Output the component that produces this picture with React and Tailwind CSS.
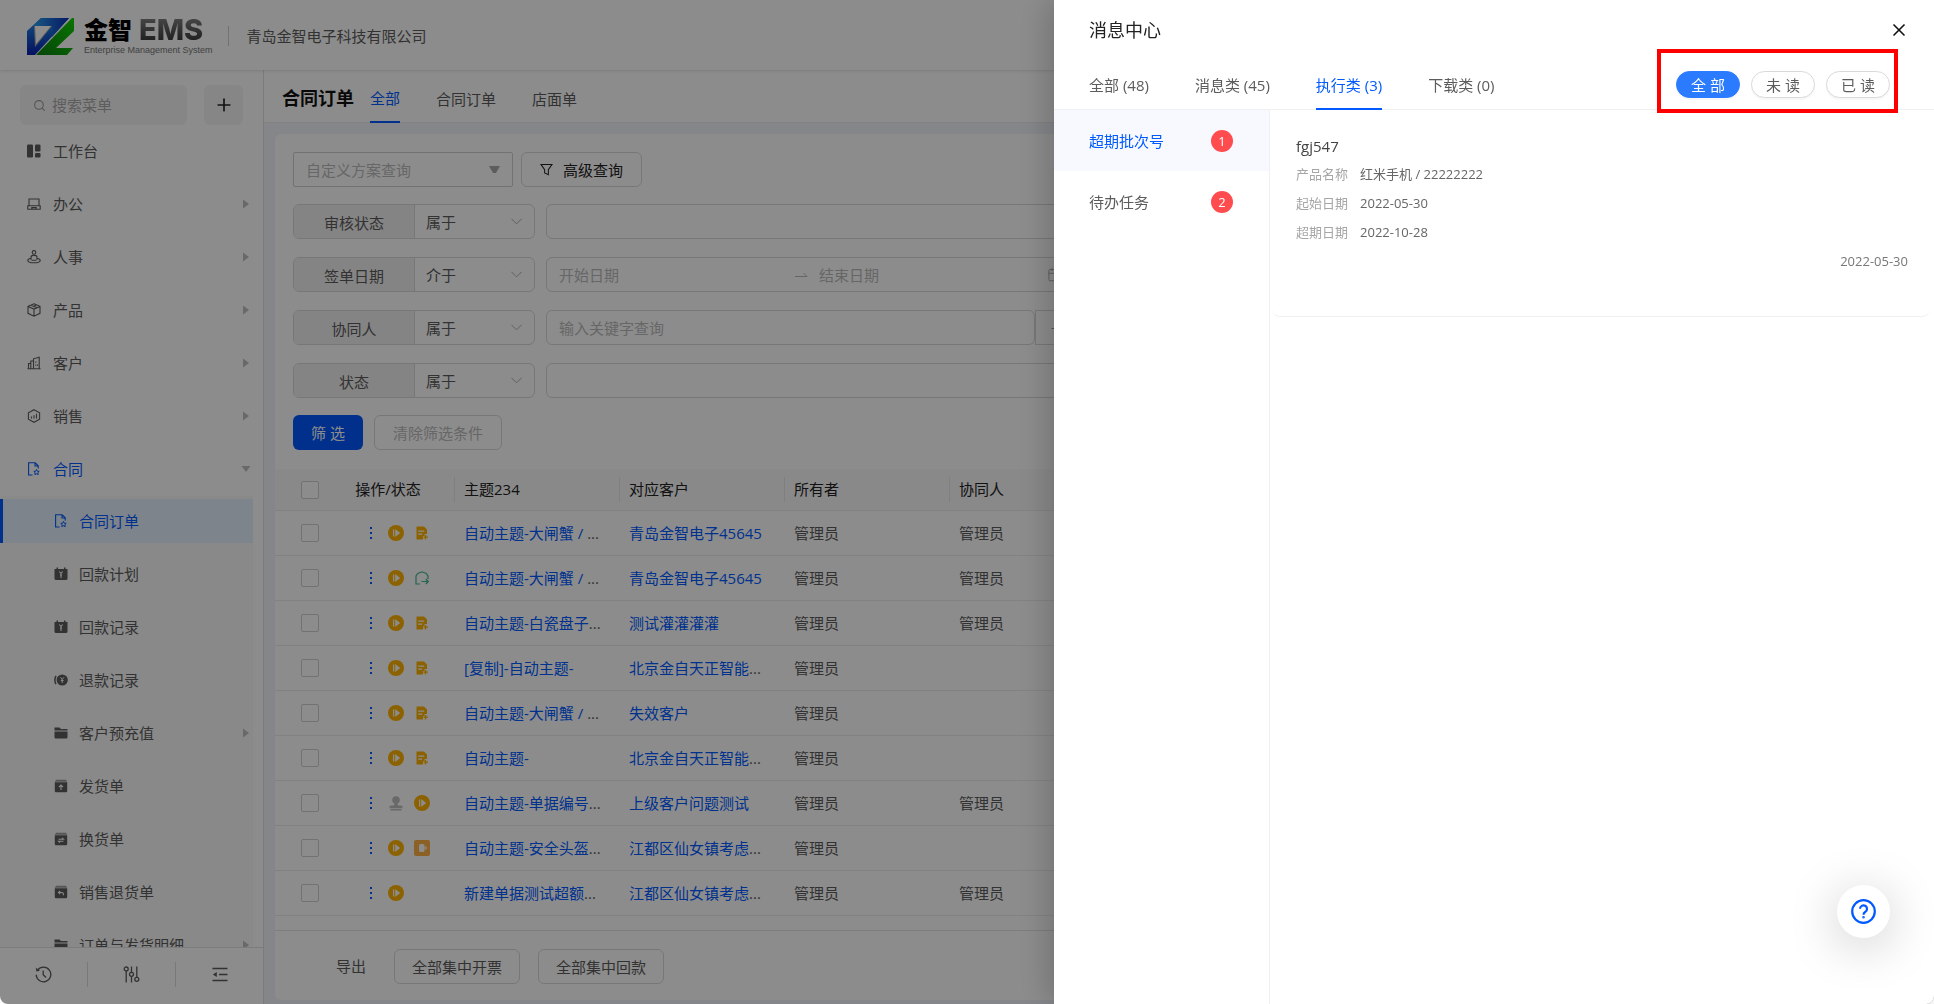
import React, { useState } from 'react';
import { ChevronDown, Plus, Search, X, Calendar } from 'lucide-react';

const BLUE = '#005aff';

/* ---------- Iconos ---------- */

const Icon = ({ size = 14, children, ...rest }) => (
  <svg width={size} height={size} viewBox="0 0 14 14" fill="none" stroke="currentColor" strokeWidth="1.1" aria-hidden="true" {...rest}>
    {children}
  </svg>
);

const IconDashboard = () => (
  <Icon fill="currentColor" stroke="none">
    <rect x="0" y="0.5" width="6" height="13" rx="1.2" />
    <rect x="8" y="0.5" width="5.5" height="7" rx="1.2" />
    <rect x="8" y="9" width="5.5" height="4.5" rx="1.2" />
  </Icon>
);

const IconOffice = () => (
  <Icon>
    <path d="M2 8.5V2h10v6.5M0.8 8.8h12.4v3.4H0.8zM4.8 12v-1.4h4.4V12" />
  </Icon>
);

const IconHr = () => (
  <Icon>
    <circle cx="7" cy="2.4" r="1.8" />
    <path d="M4 9.800V7.200C4 5.800 5 5.400 7 5.400s3 .4 3 1.800v2.600M4 8.200C2 8.600.8 9.300.8 10.200c0 1.400 2.800 2.600 6.200 2.600s6.200-1.200 6.200-2.600c0-.9-1.200-1.600-3.200-2M4.500 10.200h5" />
  </Icon>
);

const IconProduct = () => (
  <Icon>
    <path d="M7 .8l6 2.500v7L7 13.200 1 10.300v-7zM1 3.500l6 2.600 6-2.600M7 6.100v7M4 2.200l6 2.600M7 3.100l2.500-1" />
  </Icon>
);

const IconCustomer = () => (
  <Icon>
    <path d="M0.500 12.800h13M1.500 12.500V7.500h2M3.800 12.500V5h2.700v7.500M6.500 5V2.800l5.700-1.600v11.300M8.800 5.500v1.200M8.800 8.500v1.200M10.500 8.500v1.200" />
  </Icon>
);

const IconSales = () => (
  <Icon>
    <path d="M7 .7l5.600 3.100v6.400L7 13.300 1.400 10.200V3.800zM4.500 9.500V7.500M7 9.500V6.200M9.500 9.500V4.800" />
  </Icon>
);

const IconContract = () => (
  <Icon>
    <path d="M5.500 13H1.600V.8h6.600l3 3v2.700M8 .8v3.200h3.200" />
    <path d="M9.500 7.500l.8 1.700 1.900.2-1.400 1.300.4 1.900-1.700-.9-1.700.9.400-1.900L6.800 9.400l1.900-.2z" strokeWidth="1" />
  </Icon>
);

const IconPlan = () => (
  <Icon fill="currentColor" stroke="none">
    <path d="M0.500 2h2V.5h1.500V2h6V.5h1.500V2h2v9.500a1.500 1.500 0 0 1-1.500 1.500h-10a1.500 1.500 0 0 1-1.500-1.500z" />
    <path d="M5.300 4.500L7 6.500l1.700-2M7 6.500V11M6 8h2" stroke="#fafafa" strokeWidth="1.100" fill="none" />
  </Icon>
);

const IconRefund = () => (
  <Icon fill="currentColor" stroke="none">
    <circle cx="8.200" cy="7" r="5.600" />
    <path d="M2 2.800C.8 5 .6 8.500 1.900 11.200" stroke="currentColor" strokeWidth="1.500" fill="none" />
    <path d="M6.500 4.300l1.700 2.200 1.700-2.200M8.200 6.500v3.500M6.800 7.500h2.800" stroke="#fafafa" strokeWidth="1" fill="none" />
  </Icon>
);

const IconFolder = () => (
  <Icon fill="currentColor" stroke="none">
    <path d="M0.500 1.500h5L7 3h6.500v1.600H.5zM.5 5.500h13V11.500a1 1 0 0 1-1 1h-11a1 1 0 0 1-1-1z" />
  </Icon>
);

const BoxIcon = ({ d }) => (
  <Icon fill="currentColor" stroke="none">
    <path d="M2 .8h10l1.200 2H.8z" opacity="0.600" />
    <path d="M.8 3.300h12.400v8.700a1.200 1.200 0 0 1-1.200 1.200H2A1.200 1.200 0 0 1 .8 12z" />
    <path d={d} stroke="#fafafa" strokeWidth="1.100" fill="none" />
  </Icon>
);

const IconShip = () => <BoxIcon d="M7 11V6M5 8l2-2 2 2" />;
const IconSwap = () => <BoxIcon d="M4.500 7.300h5L8 5.800M9.500 9.200h-5L6 10.700" />;
const IconReturn = () => <BoxIcon d="M6.200 5.800L4.500 7.500l1.700 1.700M4.500 7.500H8c1 0 1.500 1 1.500 2.700" />;

const IconHistory = () => (
  <svg width="17" height="17" viewBox="0 0 17 17" fill="none" stroke="currentColor" strokeWidth="1.300" aria-hidden="true">
    <path d="M2.600 4.200A7.300 7.300 0 1 1 1.200 8.800M8.200 4.500v4.300l2.800 2.700" />
    <path d="M.8 1.800l.5 3.800 3.700-.8z" fill="currentColor" stroke="none" />
  </svg>
);

const IconSliders = () => (
  <svg width="17" height="17" viewBox="0 0 17 17" fill="none" stroke="currentColor" strokeWidth="1.300" aria-hidden="true">
    <circle cx="3.200" cy="3" r="2" />
    <circle cx="8.500" cy="8.300" r="2" />
    <circle cx="13.800" cy="13.300" r="2" />
    <path d="M3.200 5v11.500M8.500.5v5.800M8.500 10.300v6.200M13.800.5v10.800" />
  </svg>
);

const IconFold = () => (
  <svg width="16" height="15" viewBox="0 0 16 15" fill="none" stroke="currentColor" strokeWidth="1.300" aria-hidden="true">
    <path d="M.5 1.500h15M7 7.500h8.500M.5 13.500h15" />
    <path d="M.8 7.500l4-2.500v5z" fill="currentColor" stroke="none" />
  </svg>
);

const IconFilter = () => (
  <Icon size={13}>
    <path d="M1 1.500h12L9 7.200v5.500l-4-2V7.200z" />
  </Icon>
);

/* Iconos de estado de cada fila */
const StatusPlay = () => (
  <svg width="16" height="16" viewBox="0 0 16 16" aria-hidden="true">
    <circle cx="8" cy="8" r="8" fill="#ffb300" />
    <path d="M5 4.500h1.200v7H5zM7.200 4l5 4-5 4z" fill="#fff" />
  </svg>
);

const StatusDoc = () => (
  <svg width="12" height="14" viewBox="0 0 12 14" aria-hidden="true">
    <path d="M.5.5H8l3 3V8H8.500v2H7v3.500H.5z" fill="#ffb300" />
    <path d="M2.200 5.200h6M2.200 8.200h4" stroke="#fff" strokeWidth="1.200" />
    <path d="M9.500 9v4.500M7.500 11.200H12" stroke="#ffb300" strokeWidth="1.300" />
  </svg>
);

const StatusHouse = () => (
  <svg width="14" height="14" viewBox="0 0 14 14" fill="none" stroke="#3fb88a" strokeWidth="1.200" aria-hidden="true">
    <path d="M5 13H1V5l1.800-2.500L7 .8l4.200 1.700L13 5v3M6.500 10.500H13M10.800 8l2.500 2.500-2.500 2.500" />
  </svg>
);

const StatusStamp = () => (
  <svg width="14" height="15" viewBox="0 0 14 15" fill="#c0c0c0" aria-hidden="true">
    <circle cx="7" cy="4" r="3.800" />
    <path d="M5.500 7h3l.5 2.500h3a1.500 1.500 0 0 1 1.500 1.500v1.200H.5V11A1.500 1.500 0 0 1 2 9.500h3zM1.500 13h11v1.500h-11z" />
  </svg>
);

const StatusTag = () => (
  <svg width="16" height="16" viewBox="0 0 16 16" aria-hidden="true">
    <rect width="16" height="16" rx="2" fill="#ffb144" />
    <rect x="5" y="4" width="5.500" height="8" rx="1.500" fill="#fff" />
    <path d="M9 8h3.500M11.200 6.500L12.800 8l-1.600 1.500" stroke="#fff" fill="none" />
  </svg>
);

const STATUS = { play: StatusPlay, doc: StatusDoc, house: StatusHouse, stamp: StatusStamp, tag: StatusTag };

const Caret = ({ down }) => (
  <svg width="10" height="10" viewBox="0 0 10 10" fill="#bfbfbf" className="shrink-0" aria-hidden="true">
    {down ? <path d="M.5 2h9L5 8z" /> : <path d="M2 .5v9L8 5z" />}
  </svg>
);

/* ---------- Datos ---------- */

const MENU = [
  { label: '工作台', icon: IconDashboard },
  { label: '办公', icon: IconOffice, more: true },
  { label: '人事', icon: IconHr, more: true },
  { label: '产品', icon: IconProduct, more: true },
  { label: '客户', icon: IconCustomer, more: true },
  { label: '销售', icon: IconSales, more: true },
  { label: '合同', icon: IconContract, more: true, open: true },
];

const SUBMENU = [
  { label: '合同订单', icon: IconContract, active: true },
  { label: '回款计划', icon: IconPlan },
  { label: '回款记录', icon: IconPlan },
  { label: '退款记录', icon: IconRefund },
  { label: '客户预充值', icon: IconFolder, more: true },
  { label: '发货单', icon: IconShip },
  { label: '换货单', icon: IconSwap },
  { label: '销售退货单', icon: IconReturn },
  { label: '订单与发货明细', icon: IconFolder, more: true },
];

const ROWS = [
  { icons: ['play', 'doc'], title: '自动主题-大闸蟹 / ', cut: true, client: '青岛金智电子45645', helper: '管理员' },
  { icons: ['play', 'house'], title: '自动主题-大闸蟹 / ', cut: true, client: '青岛金智电子45645', helper: '管理员' },
  { icons: ['play', 'doc'], title: '自动主题-白瓷盘子', cut: true, client: '测试灌灌灌灌', helper: '管理员' },
  { icons: ['play', 'doc'], title: '[复制]-自动主题-', client: '北京金自天正智能', clientCut: true },
  { icons: ['play', 'doc'], title: '自动主题-大闸蟹 / ', cut: true, client: '失效客户' },
  { icons: ['play', 'doc'], title: '自动主题-', client: '北京金自天正智能', clientCut: true },
  { icons: ['stamp', 'play'], title: '自动主题-单据编号', cut: true, client: '上级客户问题测试', helper: '管理员' },
  { icons: ['play', 'tag'], title: '自动主题-安全头盔', cut: true, client: '江都区仙女镇考虑', clientCut: true },
  { icons: ['play'], title: '新建单据测试超额', cut: true, client: '江都区仙女镇考虑', clientCut: true, helper: '管理员' },
];

const MESSAGE_TABS = ['全部 (48)', '消息类 (45)', '执行类 (3)', '下载类 (0)'];

/* ---------- Cabecera ---------- */

const Logo = () => (
  <div className="flex items-center gap-[10px]">
    <svg width="47" height="37" viewBox="0 0 47 37" aria-label="金智 EMS">
      <defs>
        <linearGradient id="logoBlue" x1="0.300" y1="0" x2="0.300" y2="1">
          <stop offset="0" stopColor="#2196e8" />
          <stop offset="1" stopColor="#0a1fb0" />
        </linearGradient>
        <linearGradient id="logoTop" x1="0" y1="0" x2="1" y2="0">
          <stop offset="0" stopColor="#2ba0ee" />
          <stop offset="1" stopColor="#0c2fb8" />
        </linearGradient>
        <linearGradient id="logoGreen" x1="1" y1="0" x2="0" y2="1">
          <stop offset="0" stopColor="#12d400" />
          <stop offset="1" stopColor="#0b7d12" />
        </linearGradient>
      </defs>
      <path d="M0 13L14 0h28L8 37H0z" fill="url(#logoBlue)" />
      <path d="M6 8L14 0h28L25 19V8z" fill="url(#logoTop)" />
      <path d="M7 8h18L8 29z" fill="#a8a8a8" />
      <path d="M8 8h16L9 26z" fill="#fff" />
      <path d="M47 0v13L29 30h17l-6 7H9L45 0z" fill="url(#logoGreen)" />
    </svg>
    <div className="flex flex-col">
      <div className="flex h-[28px] items-center gap-[7px]">
        <span className="text-[24px] leading-[28px] font-black text-black">金智</span>
        <span className="bg-gradient-to-b from-[#888] to-[#333] bg-clip-text font-['Inter',sans-serif] text-[29px] leading-[28px] font-extrabold text-transparent">EMS</span>
      </div>
      <span className="font-['Liberation_Sans',sans-serif] text-[9px] leading-[12px] whitespace-nowrap text-[#777]">Enterprise Management System</span>
    </div>
  </div>
);

const Header = () => (
  <header className="z-10 flex h-[70px] shrink-0 items-center bg-white pt-[2px] pl-[27px] shadow-[0_1px_3px_rgba(0,0,0,0.12)]">
    <Logo />
    <span className="ml-[15px] h-[20px] w-px bg-[#d0d0d0]" />
    <span className="ml-[18px] text-[15px] leading-[22px]">青岛金智电子科技有限公司</span>
  </header>
);

/* ---------- Menú lateral ---------- */

const Sidebar = () => (
  <aside className="flex w-[264px] shrink-0 flex-col border-r border-[#e0e0e0] bg-white pt-[15px]">
    <div className="flex shrink-0 justify-between px-5">
      <label className="flex h-[40px] w-[167px] items-center gap-[6px] rounded-md bg-[#f5f5f5] pl-[13px]">
        <Search size={13} strokeWidth={2} className="shrink-0 text-[#999]" />
        <input type="text" placeholder="搜索菜单" aria-label="搜索菜单" className="w-full min-w-0 bg-transparent text-[15px] outline-none placeholder:text-[#aaa]" />
      </label>
      <button type="button" aria-label="添加" className="flex h-[40px] w-[39px] items-center justify-center rounded-md bg-[#f5f5f5] text-[#222]">
        <Plus size={20} strokeWidth={2} />
      </button>
    </div>

    <nav className="mt-1 min-h-0 flex-1 overflow-hidden">
      <ul className="flex flex-col gap-[9px]">
        {MENU.map(({ label, icon: ItemIcon, more, open }) => (
          <li key={label}>
            <a href="#" className={`flex h-[44px] items-center gap-3 pr-3 pl-[27px] text-[15px] ${open ? 'text-[#005aff]' : ''}`}>
              <ItemIcon />
              <span className="flex-1 leading-[22px]">{label}</span>
              {more && <Caret down={open} />}
            </a>
          </li>
        ))}
      </ul>
      <ul className="mt-[5px] mr-[10px] flex flex-col gap-[9px] bg-[#f9f9f9] pt-[3px]">
        {SUBMENU.map(({ label, icon: ItemIcon, more, active }) => (
          <li key={label}>
            <a
              href="#"
              className={`flex h-[44px] items-center gap-[11px] border-l-3 pr-[2px] pl-[51px] text-[15px] ${active ? 'border-[#005aff] bg-[#e6f1fd] text-[#005aff]' : 'border-transparent'}`}
            >
              <ItemIcon />
              <span className="flex-1 leading-[22px] whitespace-nowrap">{label}</span>
              {more && <Caret />}
            </a>
          </li>
        ))}
      </ul>
    </nav>

    <div className="flex h-[57px] shrink-0 items-center border-t border-[#e2e2e2] pb-1">
      <button type="button" aria-label="历史" className="flex h-[25px] flex-1 items-center justify-center border-r border-[#ddd]">
        <IconHistory />
      </button>
      <button type="button" aria-label="设置" className="flex h-[25px] flex-1 items-center justify-center border-r border-[#ddd]">
        <IconSliders />
      </button>
      <button type="button" aria-label="收起" className="flex h-[25px] flex-1 items-center justify-center">
        <IconFold />
      </button>
    </div>
  </aside>
);

/* ---------- Filtros ---------- */

const FilterRow = ({ label, op, children }) => (
  <div className="flex h-[35px] gap-[11px]">
    <div className="flex w-[242px] shrink-0 overflow-hidden rounded-md border border-[#d9d9d9]">
      <span className="flex w-[121px] items-center justify-center border-r border-[#d9d9d9] bg-[#f0f0f0] pt-[2px]">{label}</span>
      <div className="relative flex-1">
        <select aria-label={label} defaultValue={op} className="h-full w-full appearance-none bg-transparent px-[11px] outline-none">
          <option>{op}</option>
        </select>
        <ChevronDown size={19} strokeWidth={1.2} className="pointer-events-none absolute top-[7px] right-2 text-[#aaa]" />
      </div>
    </div>
    {children}
  </div>
);

const inputBox = 'min-w-0 flex-1 rounded-md border border-[#d9d9d9] bg-white px-3 outline-none placeholder:text-[#bbb]';

const Filters = () => (
  <form className="flex flex-col gap-[17px] px-[18px]" onSubmit={(e) => e.preventDefault()}>
    <div className="flex gap-2">
      <div className="relative h-[35px] w-[220px]">
        <select aria-label="自定义方案查询" className="h-full w-full appearance-none rounded-xs border border-[#d0d0d0] bg-white px-3 text-[#bbb] outline-none">
          <option>自定义方案查询</option>
        </select>
        <svg width="11" height="8" viewBox="0 0 11 8" fill="#aaa" className="pointer-events-none absolute top-[14px] right-[13px]" aria-hidden="true">
          <path d="M0 0h11L7 7H4z" />
        </svg>
      </div>
      <button type="button" className="flex h-[35px] items-center gap-[10px] rounded-md border border-[#d9d9d9] px-[18px] text-[#222]">
        <IconFilter />
        高级查询
      </button>
    </div>

    <div className="grid grid-cols-2 gap-12">
      <div className="flex flex-col gap-[18px]">
        <FilterRow label="审核状态" op="属于">
          <input type="text" aria-label="审核状态值" className={inputBox} />
        </FilterRow>
        <FilterRow label="签单日期" op="介于">
          <div className="flex min-w-0 flex-1 items-center rounded-md border border-[#d9d9d9] px-3">
            <input type="text" placeholder="开始日期" aria-label="开始日期" className="w-[236px] outline-none placeholder:text-[#bbb]" />
            <svg width="13" height="6" viewBox="0 0 13 6" fill="none" stroke="#bbb" className="mr-[11px] shrink-0" aria-hidden="true">
              <path d="M0 4.500h12L8.500 1" />
            </svg>
            <input type="text" placeholder="结束日期" aria-label="结束日期" className="min-w-0 flex-1 outline-none placeholder:text-[#bbb]" />
            <Calendar size={15} strokeWidth={1.5} className="text-[#aaa]" />
          </div>
        </FilterRow>
        <FilterRow label="协同人" op="属于">
          <div className="flex min-w-0 flex-1">
            <input type="text" placeholder="输入关键字查询" aria-label="协同人关键字" className={inputBox} />
            <button type="button" aria-label="选择" className="w-[40px] border border-[#d9d9d9] text-[#999]">+</button>
          </div>
        </FilterRow>
        <FilterRow label="状态" op="属于">
          <input type="text" aria-label="状态值" className={inputBox} />
        </FilterRow>
      </div>
    </div>

    <div className="flex gap-[11px]">
      <button type="submit" className="h-[35px] rounded-md bg-[#0057ff] px-[18px] text-white">筛 选</button>
      <button type="button" className="h-[35px] rounded-md border border-[#d9d9d9] px-[18px] text-[#bbb]">清除筛选条件</button>
    </div>
  </form>
);

/* ---------- Tabla ---------- */

const CheckBox = ({ label }) => (
  <input type="checkbox" aria-label={label} className="ml-[26px] block h-[18px] w-[18px] appearance-none rounded-xs border border-[#d0d0d0] bg-white" />
);

const HeadCell = ({ children, center }) => (
  <th className="h-[42px] border-b border-[#ececec] p-0 font-normal">
    <div className={`h-[25px] border-r border-[#e8e8e8] leading-[25px] ${center ? 'text-center' : 'pl-[9px] text-left'}`}>{children}</div>
  </th>
);

const LinkCell = ({ text, cut }) => (
  <td className="h-[45px] border-b border-[#ececec] p-0 pl-[9px] whitespace-nowrap">
    <a href="#" className="text-[#005aff]">{text}</a>
    {cut && '...'}
  </td>
);

const OrderTable = () => (
  <table className="mt-[19px] w-full table-fixed border-separate border-spacing-0">
    <colgroup>
      <col className="w-[47px]" />
      <col className="w-[133px]" />
      <col className="w-[165px]" />
      <col className="w-[165px]" />
      <col className="w-[165px]" />
      <col />
    </colgroup>
    <thead className="bg-[#fafafa] text-[#222]">
      <tr>
        <th className="h-[42px] border-b border-[#ececec] p-0"><CheckBox label="全选" /></th>
        <HeadCell center>操作/状态</HeadCell>
        <HeadCell>主题234</HeadCell>
        <HeadCell>对应客户</HeadCell>
        <HeadCell>所有者</HeadCell>
        <HeadCell>协同人</HeadCell>
      </tr>
    </thead>
    <tbody>
      {ROWS.map((row, i) => (
        <tr key={i}>
          <td className="h-[45px] border-b border-[#ececec] p-0"><CheckBox label={`选择第${i + 1}行`} /></td>
          <td className="h-[45px] border-b border-[#ececec] p-0 pl-[48px]">
            <div className="flex items-center">
              <button type="button" aria-label="更多操作" className="mr-4">
                <svg width="2" height="12" viewBox="0 0 2 12" fill={BLUE} aria-hidden="true">
                  <path d="M0 0h2v2H0zM0 5h2v2H0zM0 10h2v2H0z" />
                </svg>
              </button>
              {row.icons.map((name) => {
                const StatusIcon = STATUS[name];
                return (
                  <span key={name} className="mr-[10px] flex w-4 justify-center">
                    <StatusIcon />
                  </span>
                );
              })}
            </div>
          </td>
          <LinkCell text={row.title} cut={row.cut} />
          <LinkCell text={row.client} cut={row.clientCut} />
          <td className="h-[45px] border-b border-[#ececec] p-0 pl-[9px]">管理员</td>
          <td className="h-[45px] border-b border-[#ececec] p-0 pl-[9px]">{row.helper}</td>
        </tr>
      ))}
    </tbody>
  </table>
);

const Content = () => (
  <main className="flex min-w-0 flex-1 flex-col bg-[#f0f4fb]">
    <div className="flex h-[53px] shrink-0 items-stretch border-b border-[#ececec] bg-white pl-[18px]">
      <h1 className="flex items-center pt-1 text-[18px] font-bold text-[#111]">合同订单</h1>
      <div className="-mb-px ml-4 flex gap-9">
        <a href="#" className="flex items-center border-b-2 border-[#005aff] pt-1 text-[#005aff]">全部</a>
        <a href="#" className="flex items-center pt-1">合同订单</a>
        <a href="#" className="flex items-center pt-1">店面单</a>
      </div>
    </div>
    <section className="mx-[11px] mt-[11px] mb-1 flex min-h-0 flex-1 flex-col rounded-md bg-white pt-[18px]">
      <Filters />
      <OrderTable />
      <footer className="mt-[14px] flex flex-1 items-start border-t border-[#e4e4e4] pt-[18px] pl-[61px]">
        <a href="#" className="leading-[35px]">导出</a>
        <button type="button" className="ml-[28px] h-[35px] rounded-md border border-[#d9d9d9] px-[17px]">全部集中开票</button>
        <button type="button" className="ml-[18px] h-[35px] rounded-md border border-[#d9d9d9] px-[17px]">全部集中回款</button>
      </footer>
    </section>
  </main>
);

/* ---------- Centro de mensajes ---------- */

const Pill = ({ children, active, onClick }) => (
  <button
    type="button"
    onClick={onClick}
    className={`h-[27px] w-[64px] rounded-full border leading-[24px] shadow-[0_2px_0_rgba(0,0,0,0.03)] ${active ? 'border-[#2a7bff] bg-[#2a7bff] text-white' : 'border-[#d9d9d9] bg-white'}`}
  >
    {children}
  </button>
);

const Field = ({ label, value }) => (
  <div className="flex gap-[12px] leading-[29px]">
    <dt className="text-[#a6a6a6]">{label}</dt>
    <dd className="text-[#666]">{value}</dd>
  </div>
);

const MessageDrawer = () => {
  const [filter, setFilter] = useState('全 部');

  return (
    <div role="dialog" aria-label="消息中心" className="fixed inset-y-0 right-0 flex w-[880px] flex-col rounded-br-lg bg-white shadow-[-6px_0_32px_rgba(0,0,0,0.2)]">
      <div className="flex h-[60px] shrink-0 items-center justify-between pr-[25px] pl-[35px]">
        <h2 className="text-[18px] text-[#222]">消息中心</h2>
        <button type="button" aria-label="关闭" className="text-[#111]">
          <X size={20} strokeWidth={2} />
        </button>
      </div>

      <div className="flex h-[50px] shrink-0 border-b border-[#f0f0f0] pl-[35px]">
        <div className="flex flex-1 gap-[46px]">
          {MESSAGE_TABS.map((tab) => (
            <a key={tab} href="#" className={`-mb-px flex items-center border-b-2 pt-[1px] ${tab.startsWith('执行') ? 'border-[#005aff] text-[#005aff]' : 'border-transparent'}`}>
              {tab}
            </a>
          ))}
        </div>
        {/* Marco rojo alrededor de los filtros de lectura */}
        <div className="relative z-10 -mt-[11px] mr-9 flex h-[64px] w-[241px] items-start justify-end gap-[11px] border-4 border-[#ff0000] pt-[18px] pr-1">
          {['全 部', '未 读', '已 读'].map((name) => (
            <Pill key={name} active={filter === name} onClick={() => setFilter(name)}>{name}</Pill>
          ))}
        </div>
      </div>

      <div className="flex min-h-0 flex-1">
        <ul className="w-[216px] shrink-0 border-r border-[#f0f0f0]">
          <li>
            <a href="#" className="flex h-[61px] items-center justify-between bg-[#f8f9fe] pr-[36px] pl-[35px] text-[#005aff]">
              超期批次号
              <span className="flex h-[22px] w-[22px] items-center justify-center rounded-full bg-[#ff4d4f] text-[13px] text-white">1</span>
            </a>
          </li>
          <li>
            <a href="#" className="flex h-[61px] items-center justify-between pr-[36px] pl-[35px]">
              待办任务
              <span className="flex h-[22px] w-[22px] items-center justify-center rounded-full bg-[#ff4d4f] text-[13px] text-white">2</span>
            </a>
          </li>
        </ul>
        <article className="mr-1 ml-[2px] flex h-[207px] flex-1 flex-col rounded-lg border-b border-[#eef0f0] pt-6 pr-[22px] pl-6">
          <h3 className="leading-[24px] text-[#444]">fgj547</h3>
          <dl className="mt-[2px] text-[13px]">
            <Field label="产品名称" value="红米手机 / 22222222" />
            <Field label="起始日期" value="2022-05-30" />
            <Field label="超期日期" value="2022-10-28" />
          </dl>
          <time className="text-right text-[13px] leading-[29px] text-[#777]">2022-05-30</time>
        </article>
      </div>
    </div>
  );
};

const App = () => (
  <div className="flex h-screen flex-col overflow-hidden rounded-b-lg font-['Open_Sans','Noto_Sans_CJK_SC',sans-serif] text-[15px] leading-[22px] text-[#5c5c5c]">
    <Header />
    <div className="flex min-h-0 flex-1">
      <Sidebar />
      <Content />
    </div>
    <div className="fixed inset-0 z-20 rounded-b-lg bg-black/45">
      <MessageDrawer />
      <button type="button" aria-label="帮助" className="fixed right-11 bottom-[66px] flex h-[53px] w-[53px] items-center justify-center rounded-full bg-white shadow-[0_8px_50px_rgba(0,0,0,0.22)]">
        <svg width="25" height="25" viewBox="0 0 25 25" fill="none" stroke={BLUE} strokeWidth="2.200" aria-hidden="true">
          <circle cx="12.500" cy="12.500" r="11.300" />
          <path d="M9 9.800a3.500 3.500 0 1 1 5.400 3c-1.300.8-1.900 1.400-1.900 2.900" />
          <circle cx="12.500" cy="18.300" r="0.500" strokeWidth="1.600" />
        </svg>
      </button>
    </div>
  </div>
);

export default App;
